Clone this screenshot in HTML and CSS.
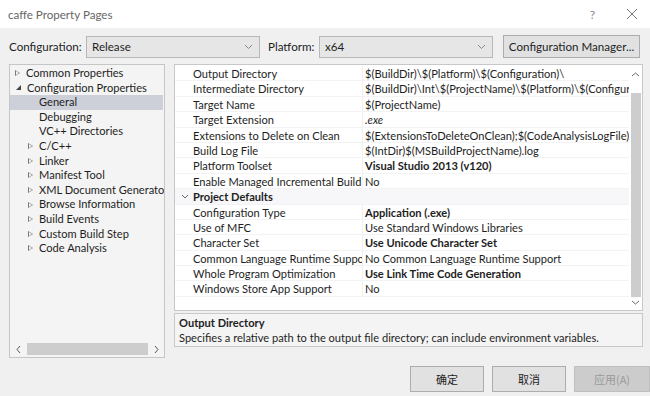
FILE: index.html
```html
<!DOCTYPE html>
<html>
<head>
<title>caffe Property Pages</title>
<link rel="stylesheet" href="styles.css">
</head>
<body>
<div id="dialog">
  <div class="titlebar">
    <span class="title">caffe Property Pages</span>
    <span class="help">?</span>
    <svg class="close" width="12" height="12" viewBox="0 0 12 12"><path d="M1 1L11 11M11 1L1 11" stroke="#777" stroke-width="1" fill="none"/></svg>
  </div>

  <div class="main">
    <div class="config-row">
      <label class="lbl">Configuration:</label>
      <div class="combo"><span>Release</span><svg width="9" height="6" viewBox="0 0 9 6"><path d="M1 1L4.5 4.5L8 1" stroke="#888" fill="none"/></svg></div>
      <label class="lbl lbl-platform">Platform:</label>
      <div class="combo"><span>x64</span><svg width="9" height="6" viewBox="0 0 9 6"><path d="M1 1L4.5 4.5L8 1" stroke="#888" fill="none"/></svg></div>
      <button type="button" class="btn-manager">Configuration Manager...</button>
    </div>

    <div class="panes">
      <div class="tree">
        <ul class="tree-list">
          <li class="lvl0"><i class="tri"></i>Common Properties</li>
          <li class="lvl0"><i class="tri open"></i>Configuration Properties</li>
          <li class="lvl1 selected">General</li>
          <li class="lvl1">Debugging</li>
          <li class="lvl1">VC++ Directories</li>
          <li class="lvl1b"><i class="tri"></i>C/C++</li>
          <li class="lvl1b"><i class="tri"></i>Linker</li>
          <li class="lvl1b"><i class="tri"></i>Manifest Tool</li>
          <li class="lvl1b"><i class="tri"></i>XML Document Generator Tool</li>
          <li class="lvl1b"><i class="tri"></i>Browse Information</li>
          <li class="lvl1b"><i class="tri"></i>Build Events</li>
          <li class="lvl1b"><i class="tri"></i>Custom Build Step</li>
          <li class="lvl1b"><i class="tri"></i>Code Analysis</li>
        </ul>
        <div class="hscroll">
          <svg width="7" height="9" viewBox="0 0 7 9"><path d="M5 1L2 4.5L5 8" stroke="#555" fill="none"/></svg>
          <div class="hthumb"></div>
          <svg width="7" height="9" viewBox="0 0 7 9"><path d="M2 1L5 4.5L2 8" stroke="#555" fill="none"/></svg>
        </div>
      </div>

      <div class="right">
        <div class="grid">
          <div class="rows">
            <div class="row"><span class="gut"></span><span class="name">Output Directory</span><span class="val">$(BuildDir)\$(Platform)\$(Configuration)\</span></div>
            <div class="row"><span class="gut"></span><span class="name">Intermediate Directory</span><span class="val">$(BuildDir)\Int\$(ProjectName)\$(Platform)\$(Configuration)\</span></div>
            <div class="row"><span class="gut"></span><span class="name">Target Name</span><span class="val">$(ProjectName)</span></div>
            <div class="row"><span class="gut"></span><span class="name">Target Extension</span><span class="val italic">.exe</span></div>
            <div class="row"><span class="gut"></span><span class="name">Extensions to Delete on Clean</span><span class="val">$(ExtensionsToDeleteOnClean);$(CodeAnalysisLogFile)</span></div>
            <div class="row"><span class="gut"></span><span class="name">Build Log File</span><span class="val">$(IntDir)$(MSBuildProjectName).log</span></div>
            <div class="row"><span class="gut"></span><span class="name">Platform Toolset</span><span class="val bold">Visual Studio 2013 (v120)</span></div>
            <div class="row"><span class="gut"></span><span class="name">Enable Managed Incremental Build</span><span class="val">No</span></div>
            <div class="row category"><span class="gut"><svg width="8" height="5" viewBox="0 0 8 5"><path d="M1 1L4 4L7 1" stroke="#666" fill="none"/></svg></span><span class="name bold">Project Defaults</span><span class="val"></span></div>
            <div class="row"><span class="gut"></span><span class="name">Configuration Type</span><span class="val bold">Application (.exe)</span></div>
            <div class="row"><span class="gut"></span><span class="name">Use of MFC</span><span class="val">Use Standard Windows Libraries</span></div>
            <div class="row"><span class="gut"></span><span class="name">Character Set</span><span class="val bold">Use Unicode Character Set</span></div>
            <div class="row"><span class="gut"></span><span class="name">Common Language Runtime Support</span><span class="val">No Common Language Runtime Support</span></div>
            <div class="row"><span class="gut"></span><span class="name">Whole Program Optimization</span><span class="val bold">Use Link Time Code Generation</span></div>
            <div class="row"><span class="gut"></span><span class="name">Windows Store App Support</span><span class="val">No</span></div>
          </div>
          <div class="vscroll">
            <svg width="9" height="7" viewBox="0 0 9 7"><path d="M1 5L4.5 2L8 5" stroke="#666" fill="none"/></svg>
            <div class="vthumb"></div>
            <svg width="9" height="7" viewBox="0 0 9 7"><path d="M1 2L4.5 5L8 2" stroke="#666" fill="none"/></svg>
          </div>
        </div>
        <div class="desc">
          <div class="desc-title">Output Directory</div>
          <div class="desc-text">Specifies a relative path to the output file directory; can include environment variables.</div>
        </div>
      </div>
    </div>

    <div class="buttons">
      <button type="button" class="btn">确定</button>
      <button type="button" class="btn">取消</button>
      <button type="button" class="btn disabled">应用(A)</button>
    </div>
  </div>
</div>
</body>
</html>
```

FILE: styles.css
```css
html, body {
  margin:0;
  padding:0;
}
body {
  width:650px;
  height:396px;
  overflow:hidden;
  background:#f0f0f0;
  font-family:Lato, "Noto Sans CJK SC", sans-serif;
  font-size:11.1px;
  color:#1e1e1e;
}
#dialog {
  width:650px;
  height:396px;
}
.titlebar {
  height:28px;
  background:#fff;
  display:flex;
  align-items:center;
  padding-left:8px;
}
.title {
  flex:1;
  color:#666;
  font-size:11.6px;
}
.help {
  color:#888;
  font-size:12px;
  margin-right:31px;
}
.close {
  margin-right:12px;
}
.main {
  padding:0 0 0 9px;
}
.config-row {
  display:flex;
  align-items:center;
  height:23px;
  margin-top:7px;
}
.lbl {
  width:77px;
  font-size:11.6px;
}
.lbl-platform {
  width:51px;
  margin-left:8px;
}
.combo {
  width:174px;
  height:22px;
  border:1px solid #b8b8b8;
  background:#e6e6e6;
  display:flex;
  align-items:center;
  justify-content:space-between;
  padding:0 6px 0 5px;
  box-sizing:border-box;
  font-size:11.6px;
}
.btn-manager {
  margin-left:10px;
  width:137px;
  height:23px;
  border:1px solid #adadad;
  background:#e1e1e1;
  font-family:inherit;
  font-size:11.6px;
  color:#1e1e1e;
  padding:0;
  white-space:nowrap;
}
.panes {
  display:flex;
  gap:9px;
  margin-top:6px;
}
.tree {
  width:156px;
  height:294px;
  border:1px solid #c6c6c6;
  background:#f4f4f4;
  box-sizing:border-box;
  display:flex;
  flex-direction:column;
  justify-content:space-between;
  overflow:hidden;
}
.tree-list {
  list-style:none;
  margin:1px 0 0;
  padding:0;
}
.tree-list li {
  height:14.6px;
  line-height:14.6px;
  white-space:nowrap;
  display:flex;
  align-items:center;
}
.lvl0 {
  padding-left:5px;
}
.lvl1 {
  padding-left:29px;
}
.lvl1b {
  padding-left:18px;
}
.selected {
  background:#cdd0d9;
  margin-right:1px;
}
.tri {
  width:0;
  height:0;
  border-left:5px solid #777;
  border-top:3.5px solid transparent;
  border-bottom:3.5px solid transparent;
  margin-right:6px;
  box-sizing:border-box;
  position:relative;
}
.tri:after {
  content:"";
  position:absolute;
  left:-4px;
  top:-2px;
  border-left:3px solid #f4f4f4;
  border-top:2px solid transparent;
  border-bottom:2px solid transparent;
}
.tri.open {
  border:none;
  width:0;
  height:0;
  border-right:5px solid #444;
  border-top:5px solid transparent;
  margin-right:6px;
  margin-left:1px;
}
.tri.open:after {
  display:none;
}
.hscroll {
  height:16px;
  display:flex;
  align-items:center;
  padding:0 4px 0 5px;
  gap:5px;
}
.hthumb {
  flex:1;
  height:12px;
  background:#cdcdcd;
}
.right {
  width:469px;
  display:flex;
  flex-direction:column;
  gap:2px;
}
.grid {
  height:247px;
  border:1px solid #c8c8c8;
  background:#fff;
  box-sizing:border-box;
  display:flex;
}
.rows {
  flex:1;
  padding-top:1px;
  overflow:hidden;
}
.row {
  display:flex;
  height:15.4px;
  line-height:15.4px;
  border-bottom:1px solid #f3f3f3;
  box-sizing:border-box;
}
.gut {
  width:18px;
  flex:none;
  display:flex;
  align-items:center;
  justify-content:center;
  padding-left:2px;
  box-sizing:border-box;
}
.name {
  width:170px;
  flex:none;
  overflow:hidden;
  white-space:nowrap;
  border-right:1px solid #f0f0f0;
  box-sizing:border-box;
}
.val {
  flex:1;
  padding-left:2px;
  overflow:hidden;
  white-space:nowrap;
}
.category {
  background:#f7f7f9;
}
.category .name {
  border-right:none;
}
.bold {
  font-weight:bold;
}
.italic {
  font-style:italic;
}
.vscroll {
  width:13px;
  flex:none;
  display:flex;
  flex-direction:column;
  align-items:center;
  justify-content:space-between;
  padding:6px 0 4px;
  box-sizing:border-box;
}
.vthumb {
  width:10px;
  flex:1;
  margin:15px 0 2px;
  background:#cdcdcd;
}
.desc {
  height:34px;
  border:1px solid #c8c8c8;
  background:#f4f4f4;
  box-sizing:border-box;
  padding:1px 4px;
  line-height:15px;
  overflow:hidden;
}
.desc-title {
  font-weight:bold;
}
.buttons {
  display:flex;
  justify-content:flex-end;
  gap:8px;
  margin-top:8px;
}
.btn {
  width:74px;
  height:26px;
  border:1px solid #adadad;
  background:#e1e1e1;
  font-family:"Noto Sans CJK SC", sans-serif;
  font-size:11px;
  color:#1e1e1e;
  padding:0;
}
.btn.disabled {
  width:76px;
  background:#cccccc;
  border-color:#bfbfbf;
  color:#9a9a9a;
}
```
